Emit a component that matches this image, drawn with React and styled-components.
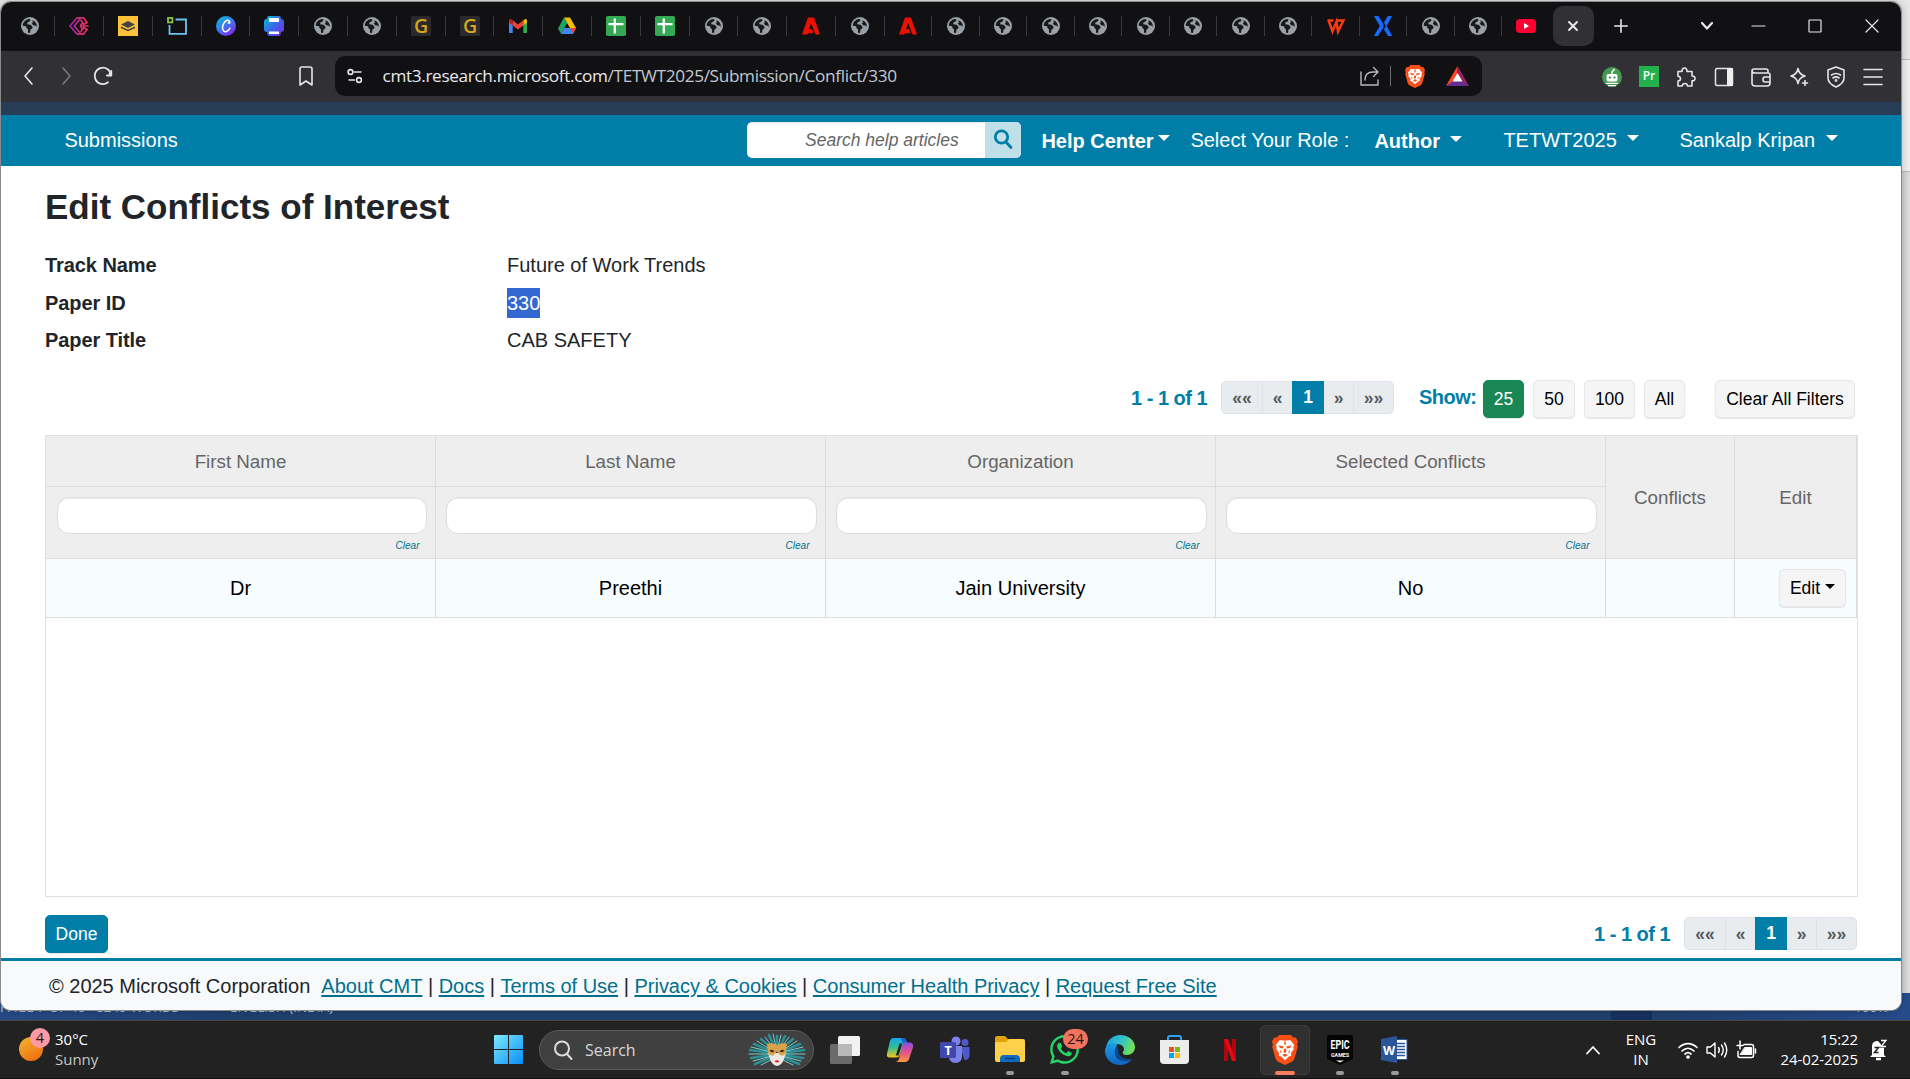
import React from "react";
import styled, { createGlobalStyle, css } from "styled-components";
import { FaWhatsapp } from "react-icons/fa6";

const arial = `"Liberation Sans", Arial, sans-serif`;
const segoe = `"Open Sans", "Noto Sans", sans-serif`;
const teal = "#007ea8";

const GlobalStyle = createGlobalStyle`
  *, *::before, *::after { box-sizing: border-box; }
  body { margin: 0; overflow: hidden; background: #222; }
  svg { display: block; flex: none; overflow: visible; }
`;

/* ---------- desktop ---------- */

const Desktop = styled.div`
  position: relative;
  display: flex;
  flex-direction: column;
  width: 1910px;
  height: 1079px;
  overflow: hidden;
`;

const WordWindow = styled.div`
  display: flex;
  flex-direction: column;
  height: 1020px;
  background: #dcdcdc;
`;

const WordRibbon = styled.div`
  height: ${(p) => p.$h}px;
  background: ${(p) => p.$bg};
  border-bottom: 1px solid #b9b9b9;
`;

const WordPage = styled.div`
  flex: 1;
  background: linear-gradient(90deg, #b5b5b5 0 1901px, #cfcfcf 1901px, #dedede);
`;

const WordStatus = styled.div`
  display: flex;
  align-items: flex-start;
  gap: 18px;
  height: 27px;
  padding: 3px 8px 0 0;
  background: linear-gradient(90deg, #264a86, #20406f 12%, #21406f 88%, #264c8c);
  color: #b8c4d8;
  font: 13.5px/22px ${segoe};
  white-space: nowrap;
`;

const StatusText = styled.span`
  width: ${(p) => p.$w}px;
  margin-left: ${(p) => p.$ml || 0}px;
`;

const ViewButton = styled.div`
  width: 41px;
  height: 27px;
  margin: -3px 0 0 1263px;
  background: #17315f;
`;

const BrowserWindow = styled.div`
  position: absolute;
  left: 1px;
  top: 2px;
  display: flex;
  flex-direction: column;
  width: 1900px;
  height: 1008px;
  border-radius: 10px;
  overflow: hidden;
  background: #fff;
  box-shadow: 0 0 0 1px #8a8a8a, 0 0 9px rgba(0, 0, 0, 0.3);
`;

/* ---------- browser chrome ---------- */

const TabStrip = styled.div`
  display: flex;
  align-items: center;
  height: 49px;
  padding: 0 22px 1px 5.5px;
  background: #111113;
  color: #e8e8ea;
`;

const Tab = styled.div`
  display: flex;
  align-items: center;
  justify-content: center;
  flex: none;
  width: ${(p) => (p.$narrow ? 47.5 : 48.8)}px;
  height: 20px;
  border-right: 1px solid ${(p) => (p.$last ? "transparent" : "#3a3a3d")};
`;

const ActiveTab = styled.div`
  display: flex;
  align-items: center;
  justify-content: center;
  width: 41px;
  height: 40px;
  margin: 0 15px 0 3px;
  border-radius: 10px;
  background: #313135;
`;

const WindowControls = styled.div`
  display: flex;
  align-items: center;
  gap: 43px;
  margin-left: auto;
`;

const TabSearch = styled.div`
  margin-right: -5px;
`;

const AddressRow = styled.div`
  display: flex;
  align-items: center;
  height: 51px;
  padding: 0 9px 0 17px;
  background: #313035;
  color: #e6e6e8;
`;

const NavButtons = styled.div`
  display: flex;
  align-items: center;
  gap: 17.5px;
  width: 317px;
  margin-top: -1px;
`;

const Bookmark = styled.div`
  margin-left: auto;
  margin-right: 21px;
`;

const UrlBox = styled.div`
  display: flex;
  align-items: center;
  width: 1147px;
  height: 40px;
  margin-top: -1px;
  padding: 0 13px 0 12px;
  border-radius: 10px;
  background: #111113;
`;

const Url = styled.div`
  margin-left: 19.5px;
  font: 17.2px/38px ${segoe};
  letter-spacing: -0.34px;
  color: #c3c7cf;
  white-space: nowrap;
  span { color: #e9e9ec; }
`;

const UrlActions = styled.div`
  display: flex;
  align-items: center;
  margin-left: auto;
`;

const Divider = styled.div`
  width: 1px;
  height: 20px;
  margin: 0 14px 0 10px;
  background: #6d6d72;
`;

const Extensions = styled.div`
  display: grid;
  grid-template-columns: repeat(8, 37.4px);
  align-items: center;
  justify-items: center;
  margin-left: auto;
`;

const ThemeStrip = styled.div`
  height: 13px;
  background: #273c57;
`;

/* ---------- site navigation ---------- */

const SiteNav = styled.nav`
  display: flex;
  align-items: center;
  height: 51px;
  padding: 0 63px 2px 63px;
  background: ${teal};
  color: #fff;
  font: 20px/30px ${arial};
  white-space: nowrap;
`;

const SearchGroup = styled.div`
  display: flex;
  flex: none;
  width: 274px;
  height: 36px;
  margin: 0 20px 0 567px;
  border-radius: 5px;
  overflow: hidden;
  background: #fff;
  box-shadow: inset 0 1px 2px rgba(0, 0, 0, 0.12);
`;

const SearchHint = styled.div`
  width: 238px;
  padding-left: 58px;
  font: italic 17.5px/36px ${arial};
  color: #666;
`;

const SearchButton = styled.div`
  display: flex;
  align-items: center;
  justify-content: center;
  width: 36px;
  padding: 0 1px 1px 0;
  background: #bfdfe9;
`;

const NavItem = styled.div`
  display: flex;
  flex: none;
  align-items: center;
  gap: ${(p) => p.$gap || 0}px;
  width: ${(p) => p.$w}px;
  padding-left: 0.4px;
  font-weight: ${(p) => (p.$bold ? 700 : 400)};
  padding-top: ${(p) => (p.$bold ? 2 : 0)}px;
`;

const Caret = styled.i`
  width: 0;
  height: 0;
  margin-top: ${(p) => p.$mt || 0}px;
  border: ${(p) => p.$s || 6}px solid transparent;
  border-top-color: currentColor;
  border-bottom: 0;
`;

/* ---------- page ---------- */

const Main = styled.main`
  display: flex;
  flex-direction: column;
  height: 792px;
  padding: 20px 43px 0 44px;
  font-family: ${arial};
  color: #212529;
`;

const Title = styled.h1`
  margin: 0 0 22px;
  font: 700 35px/42px ${arial};
`;

const Meta = styled.dl`
  display: grid;
  grid-template-columns: 462px 1fr;
  grid-auto-rows: 37.5px;
  margin: 0;
  font-size: 20px;
  line-height: 30px;
`;

const Term = styled.dt`
  font-weight: 700;
  letter-spacing: -0.07px;
`;

const Value = styled.dd`
  margin: 0;
`;

const Selected = styled.span`
  display: inline-block;
  height: 30px;
  background: #3367d1;
  color: #fff;
`;

const Controls = styled.div`
  display: flex;
  align-items: flex-start;
  justify-content: flex-end;
  height: 72px;
  padding: 17px 3px 0 0;
`;

const RangeText = styled.div`
  width: ${(p) => p.$w || 90}px;
  margin: ${(p) => p.$mt}px 0 0 ${(p) => p.$ml || 0}px;
  color: ${teal};
  font: 700 20px/30px ${arial};
  letter-spacing: -0.5px;
  white-space: nowrap;
`;

const Pager = styled.div`
  display: flex;
  width: 173px;
  height: 33px;
  margin-top: 1px;
  border: 1px solid #dee2e6;
  border-radius: 5px;
  background: #e9ecef;
  font: 700 17.5px/32px ${arial};
  color: #555b60;
`;

const PageLink = styled.span`
  width: ${(p) => p.$w}px;
  text-align: center;
  border-right: ${(p) => (p.$line ? "1px solid #dee2e6" : "0")};
  ${(p) =>
    p.$active &&
    css`
      height: 33px;
      margin-top: -1px;
      background: ${teal};
      color: #fff;
    `}
`;

const Button = styled.button`
  display: flex;
  align-items: center;
  justify-content: center;
  gap: 5px;
  width: ${(p) => p.$w}px;
  height: 38px;
  margin: 0 0 0 ${(p) => p.$ml || 0}px;
  padding: 0;
  border: 1px solid #e6e8ea;
  border-radius: 5px;
  background: #f5f5f5;
  color: #000;
  font: 17.5px/26px ${arial};
  box-shadow: 0 1px 1px rgba(0, 0, 0, 0.1);
  white-space: nowrap;
  ${(p) =>
    p.$tone &&
    css`
      border-color: ${p.$tone};
      background: ${p.$tone};
      color: #fff;
    `}
`;

const Table = styled.div`
  flex: none;
  height: 462px;
  border: 1px solid #dfe1e6;
`;

const HeadGrid = styled.div`
  display: grid;
  grid-template-columns: repeat(4, 390px) 129px 1fr;
  grid-template-rows: 51px 71px;
  background: #eee;
  border-bottom: 1px solid #ddd;
`;

const HeadCell = styled.div`
  display: flex;
  align-items: center;
  justify-content: center;
  grid-row: ${(p) => (p.$tall ? "1 / 3" : "1")};
  padding: ${(p) => (p.$tall ? "3px 0 0" : "2px 0 0")};
  border-right: 1px solid #dadde0;
  border-bottom: ${(p) => (p.$tall ? "0" : "1px solid #dadde0")};
  color: #666;
  font-size: 18.75px;
`;

const FilterCell = styled.div`
  grid-row: 2;
  grid-column: ${(p) => p.$col};
  padding: 10px 8px 0 ${(p) => (p.$col === 1 ? 11 : 10)}px;
  border-right: 1px solid #dadde0;
`;

const FilterInput = styled.div`
  height: 37px;
  border: 1px solid #ddd;
  border-radius: 12px;
  background: #fff;
  box-shadow: inset 0 1px 1px rgba(0, 0, 0, 0.08);
`;

const Clear = styled.div`
  padding: 6px 7.5px 0 0;
  text-align: right;
  font: italic 10px/12px ${arial};
  color: #00708e;
`;

const BodyRow = styled.div`
  display: grid;
  grid-template-columns: repeat(4, 390px) 129px 1fr;
  height: 59px;
  background: #f7fdff;
  border-bottom: 1px solid #dadde0;
`;

const BodyCell = styled.div`
  display: flex;
  align-items: center;
  justify-content: ${(p) => (p.$end ? "flex-end" : "center")};
  padding-top: ${(p) => (p.$end ? 0 : 2)}px;
  padding-right: ${(p) => (p.$end ? 10 : 0)}px;
  border-right: 1px solid #dadde0;
  font-size: 20px;
  color: #000;
`;

const BottomBar = styled.div`
  display: flex;
  align-items: flex-start;
  height: 61px;
  padding-top: 18px;
`;

const BottomPager = styled.div`
  display: flex;
  margin: 1px 1px 0 auto;
`;

const Footer = styled.footer`
  display: flex;
  align-items: center;
  height: 52px;
  padding: 0 48px 0;
  border-top: 3px solid ${teal};
  background: #f8f9fa;
  color: #212529;
  font: 20px/30px ${arial};
  letter-spacing: -0.01px;
  white-space: pre;
`;

const FooterLink = styled.a`
  color: #00708e;
  text-decoration: underline;
  text-decoration-thickness: 2px;
  text-underline-offset: 2px;
`;

/* ---------- taskbar ---------- */

const Taskbar = styled.div`
  display: flex;
  align-items: center;
  height: 59px;
  border-top: 1px solid #45473f;
  border-bottom: 1px solid #101010;
  background: #222;
  color: #fff;
  font: 15px/20px ${segoe};
`;

const Weather = styled.div`
  display: flex;
  flex: none;
  width: 494px;
  padding-left: 19px;
  gap: 6px;
`;

const WeatherIcon = styled.div`
  position: relative;
  width: 30px;
  height: 40px;
`;

const Sun = styled.div`
  width: 24px;
  height: 24px;
  margin-top: 7px;
  border-radius: 50%;
  background: linear-gradient(150deg, #f2b632, #f0660c);
`;

const Badge = styled.div`
  position: absolute;
  left: ${(p) => p.$x}px;
  top: ${(p) => p.$y}px;
  width: ${(p) => p.$w}px;
  height: 20px;
  border-radius: 10px;
  background: ${(p) => p.$bg};
  color: #1c1c1c;
  font: 14.5px/20px ${segoe};
  text-align: center;
`;

const TwoLine = styled.div`
  width: ${(p) => p.$w}px;
  margin-top: -1px;
  text-align: ${(p) => p.$align || "left"};
  letter-spacing: ${(p) => p.$ls || 0}px;
  white-space: nowrap;
`;

const Dim = styled.div`
  color: #c8c8c8;
`;

const SearchPill = styled.div`
  display: flex;
  flex: none;
  align-items: center;
  width: 275px;
  height: 40px;
  margin: 0 3px 0 16px;
  padding: 0 6px 0 13px;
  border: 1px solid #5a5a5a;
  border-radius: 20px;
  background: #404040;
  color: #d8d8d8;
  font: 16px/38px ${segoe};
  span { margin-left: 12px; }
  svg:last-child { margin-left: auto; }
`;

const AppSlot = styled.div`
  position: relative;
  display: flex;
  flex: none;
  align-items: center;
  justify-content: center;
  width: 55px;
  height: 50px;
`;

const AppTile = styled.div`
  display: flex;
  align-items: center;
  justify-content: center;
  width: 50px;
  height: 50px;
  border: 1px solid ${(p) => (p.$on ? "#3b3b3b" : "transparent")};
  border-radius: 5px;
  background: ${(p) => (p.$on ? "#303030" : "transparent")};
`;

const RunMark = styled.i`
  position: absolute;
  left: 50%;
  bottom: 0;
  width: ${(p) => (p.$on ? 20 : 8)}px;
  height: 4px;
  border-radius: 2px;
  background: ${(p) => (p.$on ? "#f87e62" : "#9a9a9a")};
  transform: translateX(-50%);
`;

const Tray = styled.div`
  display: flex;
  align-items: center;
  gap: 20px;
  margin-left: auto;
  padding-right: 22px;
`;

const TrayIcons = styled.div`
  display: flex;
  align-items: center;
  gap: 8px;
  margin-left: -3px;
`;

const Clock = styled.div`
  display: flex;
  align-items: center;
  gap: 10px;
  margin-left: -5px;
`;

/* ---------- icons ---------- */

const Line = ({ w = 20, h = 20, vb = "0 0 20 20", sw = 1.6, children, color = "currentColor" }) => (
  <svg width={w} height={h} viewBox={vb} fill="none" stroke={color} strokeWidth={sw} strokeLinecap="round" strokeLinejoin="round">
    {children}
  </svg>
);

const Globe = () => (
  <svg width="20" height="20" viewBox="0 0 20 20">
    <circle cx="10" cy="10" r="9" fill="#9aa0a6" />
    <path d="M2.800 8.200C3.600 5.400 6 3.200 9.200 2.900L10.600 3.800 9.600 5.600 7.400 6.400 7.200 8.200 10.400 8.800 12.400 10.600 12.300 12.500 10.500 13.600 10 17 8.100 16.800 7.900 13.300 6.300 11.700 6.200 10.200 2.800 9.800Z" fill="#17181a" />
    <path d="M12.300 4.300 14.800 5.400C16.300 7 16.900 8.600 16.800 10.700L15.200 9.600 13.300 9.200 11.700 7.500 12.900 6.500Z" fill="#17181a" />
  </svg>
);

const PinkGem = () => (
  <svg width="20" height="20" viewBox="0 0 20 20" fill="none" strokeWidth="1.7">
    <defs>
      <linearGradient id="pg" gradientUnits="userSpaceOnUse" x1="0" y1="0" x2="20" y2="0"><stop stopColor="#9a1fb8" /><stop offset="1" stopColor="#f5364a" /></linearGradient>
    </defs>
    <g stroke="url(#pg)">
      <path d="M8 1.800 1 10l7 8.200M11.500 2.500 5.300 10l6.200 7.500" />
      <path d="M8 1.800h6.500L18 6.500l-3.300 1.800-3-4.300M8 18.200h6.500L18 13.500l-3.300-1.800-3 4.300M11 10h8.500M11 10l3-3.500M11 10l3 3.500" />
    </g>
  </svg>
);

const Layers = () => (
  <svg width="20" height="20" viewBox="0 0 20 20">
    <rect width="20" height="20" fill="#fdc23a" />
    <path d="M10 5 17 8.500 10 12 3 8.500Z" fill="#444" />
    <path d="M3 11.200 10 14.500 17 11.200" fill="none" stroke="#444" strokeWidth="1.500" />
  </svg>
);

const Resize = () => (
  <svg width="20" height="20" viewBox="0 0 20 20" fill="none">
    <path d="M8.500 3.500H19V17.800H2.500V9" stroke="#6cc4f5" strokeWidth="1.800" />
    <rect x="1" y="2" width="4.400" height="4.400" stroke="#8bc34a" strokeWidth="1.800" />
  </svg>
);

const Canva = () => (
  <svg width="20" height="20" viewBox="0 0 20 20">
    <defs><linearGradient id="cv" x1="0" y1="0" x2=".7" y2="1"><stop stopColor="#00c9cf" /><stop offset=".5" stopColor="#3a7df0" /><stop offset="1" stopColor="#7d2ae8" /></linearGradient></defs>
    <circle cx="10" cy="10" r="10" fill="url(#cv)" />
    <path d="M13.800 6.800C13.800 4.600 12.600 3.900 11.200 4.300 8.300 5.100 6.300 9 6.600 12.200 6.800 15 8.500 16 10.400 15.500 11.900 15.100 13.200 13.800 13.900 12.300M13.800 6.800C13.300 7.500 12.500 7.300 12.300 6.600" fill="none" stroke="#fff" strokeWidth="1.500" strokeLinecap="round" />
  </svg>
);

const Printer = () => (
  <svg width="20" height="20" viewBox="0 0 20 20">
    <defs><linearGradient id="pr" x1="0" y1="0" x2="1" y2="1"><stop stopColor="#00c9cf" /><stop offset=".5" stopColor="#3a66e8" /><stop offset="1" stopColor="#7d2ae8" /></linearGradient></defs>
    <path d="M5 0h10q2 0 2 3 3 0 3 3v7q0 3-3 3 0 3-2 4H5q-2-1-2-4-3 0-3-3V6q0-3 3-3 0-3 2-3Z" fill="url(#pr)" />
    <rect x="5" y="2" width="10" height="4" fill="#fff" />
    <rect x="5" y="15.500" width="10" height="2.500" fill="#fff" />
  </svg>
);

const GoldG = () => (
  <svg width="20" height="20" viewBox="0 0 20 20">
    <rect width="20" height="20" rx="1.500" fill="#2a2a2c" />
    <text x="10" y="17" textAnchor="middle" fontFamily="Open Sans, sans-serif" fontWeight="600" fontSize="19.500" fill="#d8a31c">G</text>
  </svg>
);

const Gmail = () => (
  <svg width="20" height="20" viewBox="0 0 20 20">
    <path d="M1 5v12h3.700V8.500Z" fill="#4285f4" />
    <path d="M19 5v12h-3.700V8.500Z" fill="#34a853" />
    <path d="M15.300 4.300 17 3.200C18 2.800 19 3.600 19 5v1.500l-3.700 3Z" fill="#fbbc04" />
    <path d="M1 6.500V5c0-1.400 1-2.200 2-1.800l1.700 1.100v5.200Z" fill="#c5221f" />
    <path d="M4.700 4.300 10 8.500l5.300-4.200v5.200L10 13.500 4.700 9.500Z" fill="#ea4335" />
  </svg>
);

const Drive = () => (
  <svg width="20" height="20" viewBox="0 0 20 20">
    <path d="M7 1.500h6L19 12h-6L10 7Z" fill="#fbbc04" />
    <path d="M7 1.500 10.200 7 4 17.800 1 12.500Z" fill="#1fa463" />
    <path d="M7 12h12l-3 6H4Z" fill="#4285f4" />
    <path d="M13 12h6l-3 5.800Z" fill="#ea4335" />
  </svg>
);

const Sheets = () => (
  <svg width="20" height="20" viewBox="0 0 20 20">
    <rect width="20" height="20" rx="1.800" fill="#34a853" />
    <path d="M2.500 8.200h15M8.800 2.500v15" stroke="#fff" strokeWidth="2.300" />
  </svg>
);

const Adobe = () => (
  <svg width="20" height="20" viewBox="0 0 20 20">
    <path d="M7 1.500h6L19 18.500h-4.500L10.200 7.200 8 13h3l1.500 4.200H7.200L6.500 18.500H1Z" fill="#eb1000" />
  </svg>
);

const Wps = () => (
  <svg width="20" height="20" viewBox="0 0 20 20" fill="none">
    <path d="M1.500 4.500h6M2.500 4l4 11.500 4-10 1.500 10L17.500 4.500h-7" stroke="#ff3a14" strokeWidth="2.400" />
  </svg>
);

const BlueX = () => (
  <svg width="20" height="20" viewBox="0 0 20 20" fill="#1769ff">
    <path d="M1 0h4.500l5 8.500v3L5 20H.8l6-10Z" /><path d="M19 0h-4.300L11 6.500l1.800 3.500L11 13.500 15 20h4.300l-5.600-10Z" />
  </svg>
);

const YouTube = () => (
  <svg width="20" height="20" viewBox="0 0 20 20">
    <rect y="3" width="20" height="14" rx="4" fill="#ff0033" /><path d="M8 7l5 3-5 3Z" fill="#fff" />
  </svg>
);

const BraveLion = ({ w, h }) => (
  <svg width={w} height={h} viewBox="0 0 20 23" preserveAspectRatio="none">
    <path d="M5.500 0h9L16.300 2h2L20 5l-.7 2 .5 2-2.500 9q-.5 1.500-2 2.500L10 23l-5.300-2.500q-1.500-1-2-2.500L.2 9l.5-2L0 5 1.700 2h2Z" fill="#fb4f16" />
    <path d="M6 3.800 10 4.500l4-.7 3 3.700-.6 2 .3 1.500-2.200 3 .3 2-1.800.5L10 19.300 7 16.500l-1.800-.5.3-2-2.200-3 .3-1.500-.6-2Z" fill="#fff" />
    <path d="M5 7.800 9 8.800 8.500 10.300 6 9.800ZM15 7.800 11 8.800 11.500 10.300 14 9.800ZM9.200 10.500h1.600l.3 2.500L10 13.800 8.900 13ZM6.800 11.500 7.500 14 6 13ZM13.200 11.500 12.500 14 14 13ZM7.800 15.200 10 14.300l2.200.9L10 16.800ZM9.400 5h1.200v2.500H9.400Z" fill="#fb4f16" />
  </svg>
);

const Bat = () => (
  <svg width="23" height="20" viewBox="0 0 23 20">
    <path d="M11.500 0 0 20 8 15.500 11.500 8Z" fill="#ff4724" />
    <path d="M11.500 0 23 20 15.500 15.500 11.500 8Z" fill="#9e1f63" />
    <path d="M0 20h23l-7-5H7Z" fill="#662d91" />
    <path d="M11.500 7 16.500 15.500h-10Z" fill="#fff" />
  </svg>
);

const Robot = () => (
  <svg width="20" height="20" viewBox="0 0 20 20">
    <circle cx="10" cy="10" r="10" fill="#459a51" />
    <path d="M10 8V5l2.500-3" stroke="#fff" strokeWidth="1.500" fill="none" />
    <rect x="4.500" y="7" width="11" height="7.500" rx="1.800" fill="#fff" />
    <circle cx="8" cy="10.500" r="1.100" fill="#2f7a3c" /><circle cx="12.500" cy="10.500" r="1.100" fill="#2f7a3c" />
    <path d="M4 16.300h12M6 18.600h8" stroke="#fff" strokeWidth="1.300" />
  </svg>
);

const PrIcon = () => (
  <svg width="20" height="21" viewBox="0 0 20 21">
    <rect width="20" height="21" fill="#22b14c" />
    <text x="10" y="14" textAnchor="middle" fontFamily="Open Sans, sans-serif" fontWeight="600" fontSize="12" fill="#fff">Pr</text>
  </svg>
);

const Puzzle = () => (
  <Line w={20} h={20}>
    <path d="M2 4.500h4C5.800 2.500 7 1 8.500 1s2.700 1.500 2.500 3.500h5V9c2-.2 3 1 3 2.500S18 14 16 13.800V19h-4.500c-.3-2-1.500-2.500-2.500-2.500S6.500 17 6.200 19H2v-5c1.800-.2 2.500-1.200 2.500-2.300S3.800 9.500 2 9.300Z" />
  </Line>
);

const Mask = () => (
  <svg width="60" height="34" viewBox="0 0 60 34">
    <g strokeLinecap="round" fill="none">
      <g stroke="#2a8f96" strokeWidth="2.600">
        <path d="M30 18 30 3M28 16 22 2M32 16 38 3M26 16 14 6M34 16 46 6M24 18 7 11M36 18 53 11M24 20 3 17M36 20 57 17M24 22 4 25M36 22 56 25M25 24 8 31M35 24 52 31" />
      </g>
      <g stroke="#7fd0ca" strokeWidth="1">
        <path d="M29 14 26 1M31 14 34 2M27 16 18 4M33 16 42 4M24 17 10 8M36 17 50 8M24 19 4 14M36 19 56 14M24 21 2 21M36 21 58 21M25 23 6 28M35 23 54 28M26 26 14 32M34 26 46 32" />
      </g>
    </g>
    <path d="M21 20h18l-2 6q-2 6-7 7-5-1-7-7Z" fill="#f0e8e2" />
    <path d="M20 11q5-2 10 1 5-3 10-1l-1 9q-3 4-6 2l-3-4-3 4q-3 2-6-2Z" fill="#dba24a" />
    <path d="M22.500 17.500q3-2 5 1-3 2-5-1ZM37.500 17.500q-3-2-5 1 3 2 5-1Z" fill="#3a2a22" />
    <path d="M27.500 28q2.500-1.500 5 0-2.500 3-5 0Z" fill="#d2202f" />
  </svg>
);

const WindowsLogo = () => (
  <svg width="29" height="29" viewBox="0 0 29 29">
    <defs><linearGradient id="wl" x1="0" y1="0" x2="1" y2="1"><stop stopColor="#7deafd" /><stop offset="1" stopColor="#0a8dfa" /></linearGradient></defs>
    <path d="M0 1q0-1 1-1h13v14H0ZM15 0h13q1 0 1 1v13H15ZM0 15h14v14H1q-1 0-1-1ZM15 15h14v13q0 1-1 1H15Z" fill="url(#wl)" />
  </svg>
);

const TaskView = () => (
  <svg width="30" height="28" viewBox="0 0 30 28">
    <rect x="8" y="0" width="22" height="20" rx="1.500" fill="#f2f2f2" />
    <rect x="0" y="8" width="22" height="20" rx="1.500" fill="#6b6b6b" />
    <rect x="8" y="8" width="14" height="12" fill="#b9b9b9" />
  </svg>
);

const Copilot = () => (
  <svg width="28" height="26" viewBox="0 0 30 28">
    <defs>
      <linearGradient id="ca" x1="0" y1="0" x2="0" y2="1"><stop stopColor="#1ea0f2" /><stop offset=".45" stopColor="#2bbf9b" /><stop offset="1" stopColor="#f6c31c" /></linearGradient>
      <linearGradient id="cb" x1="0" y1="0" x2="0" y2="1"><stop stopColor="#8a4de8" /><stop offset=".5" stopColor="#e8508c" /><stop offset="1" stopColor="#fb9b3c" /></linearGradient>
    </defs>
    <path d="M8 1h10q3 0 2 3l-5 15q-1 3-4 3H4q-4 0-3-4L4 5q1-4 4-4Z" fill="url(#ca)" />
    <path d="M16 1h3q2 0 3 3l1 3h-5Z" fill="#1766d8" />
    <path d="M19 6h6q5 0 4 5l-4 12q-1 4-5 4H10q3 0 4-4l4-14Z" fill="url(#cb)" />
    <path d="M14.500 7h3l-4 13h-3Z" fill="#222" />
  </svg>
);

const Teams = () => (
  <svg width="30" height="28" viewBox="0 0 30 28">
    <circle cx="25" cy="6.500" r="3.500" fill="#5059c9" /><circle cx="16" cy="5" r="4.500" fill="#7b83eb" />
    <path d="M20 11h9.500v8q0 5-5 5Z" fill="#5059c9" />
    <path d="M9 10h13v10q0 7-6.500 7T9 20Z" fill="#7b83eb" />
    <rect x="0" y="6" width="16" height="16" rx="1.500" fill="#4048ac" />
    <text x="8" y="18.500" textAnchor="middle" fontFamily="Open Sans, sans-serif" fontWeight="700" fontSize="12.500" fill="#fff">T</text>
  </svg>
);

const Explorer = () => (
  <svg width="30" height="27" viewBox="0 0 30 27">
    <path d="M0 2q0-2 2-2h8l3 3h15v10H0Z" fill="#e0a10a" />
    <path d="M0 6h11l3-3h14q2 0 2 2v19q0 2-2 2H2q-2 0-2-2Z" fill="#ffd04a" />
    <path d="M5 26v-3q0-4 4-4h12q4 0 4 4v3Z" fill="#0f6cc0" /><path d="M10 22.500h10" stroke="#0a3f78" strokeWidth="1.500" />
  </svg>
);

const Edge = () => (
  <svg width="30" height="30" viewBox="0 0 30 30">
    <defs>
      <linearGradient id="ea" x1="0" y1="0" x2="1" y2=".3"><stop stopColor="#1b9de2" /><stop offset=".6" stopColor="#35c3c8" /><stop offset="1" stopColor="#6de057" /></linearGradient>
      <linearGradient id="eb" x1="0" y1="0" x2="0" y2="1"><stop stopColor="#1b9de2" /><stop offset="1" stopColor="#1262c4" /></linearGradient>
    </defs>
    <path d="M1 13C2 5 8 0 15 0c9 0 15 6 15 12 0 5-4 8-8 8-3 0-5-1-4-3 3-4-1-8-6-8-5 0-9 2-11 4Z" fill="url(#ea)" />
    <path d="M0 15c1-5 6-8 11-6 3 0-1 3-1 8 0 6 5 9 10 9 3 0 5-.6 7-2-3 4-7 6-12 6C7 30-.5 24 0 15Z" fill="url(#eb)" />
    <path d="M12.500 11c-4 4-2.500 14 7.500 15 3 .2 5-.6 7-2-6 1.500-14-2-13.500-8Z" fill="#0c4a9a" />
  </svg>
);

const Store = () => (
  <svg width="29" height="29" viewBox="0 0 29 29">
    <path d="M8 6V3q0-2 2-2h9q2 0 2 2v3" fill="none" stroke="#2aa4ec" strokeWidth="2" />
    <path d="M0 5h29v20q0 4-4 4H4q-4 0-4-4Z" fill="#ececec" />
    <path d="M9 12h5v5H9Z" fill="#f25022" /><path d="M15 12h5v5h-5Z" fill="#7fba00" />
    <path d="M9 18h5v5H9Z" fill="#00a4ef" /><path d="M15 18h5v5h-5Z" fill="#ffb900" />
  </svg>
);

const Netflix = () => (
  <svg width="12" height="22" viewBox="0 0 12 22">
    <path d="M0 0h4v22H0ZM8 0h4v22H8Z" fill="#b1060f" /><path d="M0 0h4l8 22H8Z" fill="#e50914" />
  </svg>
);

const Epic = () => (
  <svg width="26" height="30" viewBox="0 0 26 30">
    <path d="M2 0h22q2 0 2 2v22L13 30 0 24V2q0-2 2-2Z" fill="#050505" />
    <text x="13" y="14" textAnchor="middle" fontFamily="Roboto, sans-serif" fontWeight="700" fontSize="13" textLength="19" lengthAdjust="spacingAndGlyphs" fill="#fff">EPIC</text>
    <text x="13" y="21.500" textAnchor="middle" fontFamily="Roboto, sans-serif" fontWeight="700" fontSize="5.500" textLength="18" lengthAdjust="spacingAndGlyphs" fill="#fff">GAMES</text>
    <path d="M9 25.500h8l-4 2Z" fill="#fff" />
  </svg>
);

const WordIcon = () => (
  <svg width="27" height="27" viewBox="0 0 27 27">
    <rect x="14" y="3.500" width="12" height="20" fill="#fff" stroke="#2b579a" />
    <path d="M16 7.500h8M16 10.500h8M16 13.500h8M16 16.500h8M16 19.500h8" stroke="#2b579a" strokeWidth="1.300" />
    <path d="M0 3 16 0v27L0 24Z" fill="#2b579a" />
    <text x="8" y="18.500" textAnchor="middle" fontFamily="Open Sans, sans-serif" fontWeight="700" fontSize="12.500" fill="#fff">W</text>
  </svg>
);

/* ---------- data ---------- */

const rep = (n, C) => Array(n).fill(C);
const tabs = [
  Globe, PinkGem, Layers, Resize, Canva, Printer, Globe, Globe, GoldG, GoldG, Gmail, Drive, Sheets, Sheets,
  Globe, Globe, Adobe, Globe, Adobe, ...rep(8, Globe), Wps, BlueX, Globe, Globe, YouTube,
];

const columns = ["First Name", "Last Name", "Organization", "Selected Conflicts"];
const row = ["Dr", "Preethi", "Jain University", "No"];
const links = ["About CMT", "Docs", "Terms of Use", "Privacy & Cookies", "Consumer Health Privacy", "Request Free Site"];

const apps = [
  { id: "taskview", icon: <TaskView /> },
  { id: "copilot", icon: <Copilot /> },
  { id: "teams", icon: <Teams /> },
  { id: "explorer", icon: <Explorer />, run: true },
  { id: "whatsapp", icon: <FaWhatsapp size={33} color="#25d366" />, run: true, badge: "24" },
  { id: "edge", icon: <Edge /> },
  { id: "store", icon: <Store /> },
  { id: "netflix", icon: <Netflix /> },
  { id: "brave", icon: <BraveLion w={26} h={30} />, run: true, on: true },
  { id: "epic", icon: <Epic />, run: true },
  { id: "word", icon: <WordIcon />, run: true },
];

const Pagination = () => (
  <Pager>
    <PageLink $w={41} $line>««</PageLink>
    <PageLink $w={29}>«</PageLink>
    <PageLink $w={32} $active>1</PageLink>
    <PageLink $w={30} $line>»</PageLink>
    <PageLink $w={39}>»»</PageLink>
  </Pager>
);

const Browser = () => (
  <BrowserWindow>
    <TabStrip>
      {tabs.map((Icon, i) => (
        <Tab key={i} $narrow={i > 17} $last={i === tabs.length - 1}><Icon /></Tab>
      ))}
      <ActiveTab><Line w={12} h={12} vb="0 0 12 12" sw={2}><path d="M2 2l8 8M10 2l-8 8" /></Line></ActiveTab>
      <Line w={24} h={14} vb="0 0 14 14"><path d="M7 .8v12.400M.8 7h12.400" /></Line>
      <WindowControls>
        <TabSearch><Line w={14} h={10} vb="0 0 14 10" sw={2.200}><path d="M2 2l5 5.500L12 2" /></Line></TabSearch>
        <Line w={13} h={14} vb="0 0 13 14" sw={1.200}><path d="M0 7h13" /></Line>
        <Line w={14} h={14} vb="0 0 14 14" sw={1.200}><rect x="1" y="1" width="12" height="12" rx=".5" /></Line>
        <Line w={14} h={14} vb="0 0 14 14" sw={1.200}><path d="M1 1l12 12M13 1L1 13" /></Line>
      </WindowControls>
    </TabStrip>
    <AddressRow>
      <NavButtons>
        <Line><path d="M14 2 7 10l7 8" /></Line>
        <Line color="#77777b"><path d="M7 2l7 8-7 8" /></Line>
        <Line sw={1.800}><path d="M15 16.300A8.200 8.200 0 1 1 18 9" /><circle cx="17.400" cy="7.600" r="1.700" fill="currentColor" stroke="none" /><path d="M18.300 5v4.500H14" /></Line>
        <Bookmark><Line w={16} h={20} vb="0 0 16 20"><path d="M2 3q0-2 2-2h8q2 0 2 2v16l-6-4-6 4Z" /></Line></Bookmark>
      </NavButtons>
      <UrlBox>
        <Line w={16} h={16} vb="0 0 16 16"><circle cx="3.500" cy="4" r="2.400" /><path d="M7.500 4H14M2 12h5.500" /><circle cx="12" cy="12" r="2.400" /></Line>
        <Url><span>cmt3.research.microsoft.com</span>/TETWT2025/Submission/Conflict/330</Url>
        <UrlActions>
          <Line sw={1.400} color="#b9b9bd"><path d="M1 6v13h17v-5M5 14c0-5 3-8 8-8h4M13.500 1.500 18 6l-4.500 4.500" /></Line>
          <Divider />
          <BraveLion w={20} h={23} />
          <svg width="21" height="1" />
          <Bat />
        </UrlActions>
      </UrlBox>
      <Extensions>
        <Robot />
        <PrIcon />
        <Puzzle />
        <svg width="20" height="20" viewBox="0 0 20 20"><rect x="1.500" y="1.500" width="17" height="17" rx="1.500" fill="none" stroke="#e6e6e8" strokeWidth="1.500" /><rect x="13" y="1" width="6" height="18" fill="#eee" /></svg>
        <Line><path d="M17 5V4q0-2-2-2H3Q1 2 1 4v12q0 3 3 3h12q3 0 3-3V8q0-2-2-2H4Q1.500 6 1 4M19 10h-5q-2 0-2 2.500T14 15h5" /></Line>
        <Line><path d="M9 1.500c.8 4.500 2.500 6.500 7 7.500-4.500 1-6.200 3-7 7.500C8.200 12 6.500 10 2 9c4.500-1 6.200-3 7-7.500Z" /><path d="M16 13.500v5M13.500 16h5" /></Line>
        <Line h={22} vb="0 0 20 22"><path d="M10 1l8 3v8c0 4-3.500 7-8 9-4.500-2-8-5-8-9V4Z" /><path d="M5.500 9c3-2 6-2 9 0M7 12c2-1.500 4-1.500 6 0" /><circle cx="10" cy="14.500" r=".6" /></Line>
        <Line w={20} h={18} vb="0 0 20 18"><path d="M1 1.500h18M1 9h18M1 16.500h18" /></Line>
      </Extensions>
    </AddressRow>
    <ThemeStrip />
    <SiteNav>
      <NavItem $w={116}>Submissions</NavItem>
      <SearchGroup>
        <SearchHint>Search help articles</SearchHint>
        <SearchButton>
          <Line w={20} h={20} sw={2.800} color={teal}><circle cx="8.500" cy="8" r="6.200" /><path d="M13 13l5 5.500" /></Line>
        </SearchButton>
      </SearchGroup>
      <NavItem $w={149} $gap={4} $bold>Help Center<Caret $mt={-5} /></NavItem>
      <NavItem $w={184}>Select Your Role :</NavItem>
      <NavItem $w={129} $gap={10} $bold>Author<Caret $mt={-4} /></NavItem>
      <NavItem $w={176} $gap={10}>TETWT2025<Caret $mt={-3} /></NavItem>
      <NavItem $w={160} $gap={11}>Sankalp Kripan<Caret $mt={-3} /></NavItem>
    </SiteNav>
    <Main>
      <Title>Edit Conflicts of Interest</Title>
      <Meta>
        <Term>Track Name</Term><Value>Future of Work Trends</Value>
        <Term>Paper ID</Term><Value><Selected>330</Selected></Value>
        <Term>Paper Title</Term><Value>CAB SAFETY</Value>
      </Meta>
      <Controls>
        <RangeText $mt={3}>1 - 1 of 1</RangeText>
        <Pagination />
        <RangeText $w={64} $mt={2} $ml={25}>Show:</RangeText>
        <Button $w={41} $tone="#198754">25</Button>
        <Button $w={42} $ml={9}>50</Button>
        <Button $w={51} $ml={9}>100</Button>
        <Button $w={41} $ml={9}>All</Button>
        <Button $w={140} $ml={30}>Clear All Filters</Button>
      </Controls>
      <Table>
        <HeadGrid>
          {columns.map((c) => <HeadCell key={c}>{c}</HeadCell>)}
          <HeadCell $tall>Conflicts</HeadCell>
          <HeadCell $tall>Edit</HeadCell>
          {columns.map((c, i) => (
            <FilterCell key={c} $col={i + 1}><FilterInput /><Clear>Clear</Clear></FilterCell>
          ))}
        </HeadGrid>
        <BodyRow>
          {row.map((c) => <BodyCell key={c}>{c}</BodyCell>)}
          <BodyCell />
          <BodyCell $end><Button $w={67}>Edit<Caret $s={5} $mt={-2} /></Button></BodyCell>
        </BodyRow>
      </Table>
      <BottomBar>
        <Button $w={63} $tone={teal}>Done</Button>
        <BottomPager>
          <RangeText $mt={3}>1 - 1 of 1</RangeText>
          <Pagination />
        </BottomPager>
      </BottomBar>
    </Main>
    <Footer>
      {"© 2025 Microsoft Corporation  "}
      {links.map((l, i) => (
        <React.Fragment key={l}>{i > 0 && " | "}<FooterLink>{l}</FooterLink></React.Fragment>
      ))}
    </Footer>
  </BrowserWindow>
);

export default function App() {
  return (
    <Desktop>
      <GlobalStyle />
      <WordWindow>
        <WordRibbon $h={60} $bg="#e6e6e6" />
        <WordRibbon $h={112} $bg="#efefef" />
        <WordPage />
        <WordStatus>
          <StatusText $w={78}>PAGE 7 OF 46</StatusText>
          <StatusText $w={116}>8249 WORDS</StatusText>
          <StatusText $w={100}>ENGLISH (INDIA)</StatusText>
          <ViewButton />
          <StatusText $w={32} $ml={184}>100%</StatusText>
        </WordStatus>
      </WordWindow>
      <Browser />
      <Taskbar>
        <Weather>
          <WeatherIcon><Sun /><Badge $x={11} $y={-2} $w={20} $bg="#ff99a4">4</Badge></WeatherIcon>
          <TwoLine $w={60}>30°C<Dim>Sunny</Dim></TwoLine>
        </Weather>
        <WindowsLogo />
        <SearchPill>
          <Line w={20} h={20} sw={2} color="#dcdcdc"><circle cx="9" cy="8.500" r="7" /><path d="M14 14l4.500 5" /></Line>
          <span>Search</span>
          <Mask />
        </SearchPill>
        {apps.map((a) => (
          <AppSlot key={a.id}>
            <AppTile $on={a.on}>{a.icon}</AppTile>
            {a.run && <RunMark $on={a.on} />}
            {a.badge && <Badge $x={26} $y={4} $w={25} $bg="#f4735e">{a.badge}</Badge>}
          </AppSlot>
        ))}
        <Tray>
          <Line w={16} h={10} vb="0 0 16 10" sw={1.800}><path d="M2 8.500 8 2l6 6.500" /></Line>
          <TwoLine $w={40} $align="center">ENG<br />IN</TwoLine>
          <TrayIcons>
            <Line w={20} h={18} vb="0 0 20 18" sw={1.700}><path d="M1 6.500c5.500-5.300 12.500-5.300 18 0M4 10c3.700-3.500 8.300-3.500 12 0M7 13c2-1.800 4-1.800 6 0" /><circle cx="10" cy="16" r="1" fill="#fff" /></Line>
            <Line w={22} h={18} vb="0 0 22 18" sw={1.400}><path d="M1 6h3.500L9 2v14l-4.500-4H1ZM12.500 6.500q1.800 2.500 0 5M15.500 4q3.500 5 0 10M18.500 2q4.500 7 0 14" /></Line>
            <Line w={21} h={18} vb="0 0 21 18" sw={1.500}><path d="M8 3.500h7.500q2 0 2 2v9q0 2-2 2H4q-2 0-2-2v-4M19.500 8v4M4 0v5M1 4.500h6M4 5v3" /><path d="M9 6.500h6.500v7H4.500Z" fill="#fff" strokeWidth="1" /></Line>
          </TrayIcons>
          <Clock>
            <TwoLine $w={86} $align="right" $ls={-0.08}>15:22<br />24-02-2025</TwoLine>
            <svg width="20" height="22" viewBox="0 0 20 22">
              <path d="M4 16V7q0-5 6-5l6 7v7l2 2H2Z" fill="#fff" />
              <path d="M8 20h5" stroke="#fff" strokeWidth="2.500" />
              <path d="M6.500 8.500h4l-4 5h4M13 2h5l-5 6h5" fill="none" stroke="#222" strokeWidth="1.500" />
              <path d="M13 1.500h5l-5 6h5" fill="none" stroke="#fff" strokeWidth="1.300" />
            </svg>
          </Clock>
        </Tray>
      </Taskbar>
    </Desktop>
  );
}
